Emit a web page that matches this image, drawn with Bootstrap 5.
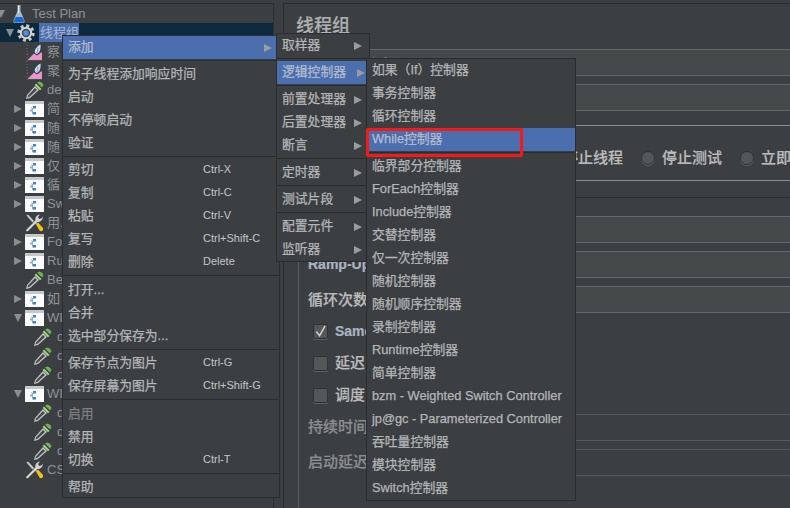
<!DOCTYPE html>
<html lang="zh">
<head>
<meta charset="utf-8">
<title>JMeter</title>
<link href="https://cdn.jsdelivr.net/npm/bootstrap@5.3.0/dist/css/bootstrap.min.css" rel="stylesheet">
<style>
html,body{width:790px;height:508px;overflow:hidden;background:#3c3f41;}
body{font-family:"Liberation Sans","Noto Sans CJK SC",sans-serif;font-size:13px;color:#bbb;position:relative;}
.app-shell{height:508px;padding-top:3px;}
/* tree */
.tree-pane{width:274px;flex:none;border-top:1px solid #2b2d2f;border-right:1px solid #2d2f31;overflow:hidden;}
.tnode{height:19px;color:#8f9396;white-space:nowrap;}
.tnode.sel{background:#0d293e;}
.lv0{padding-left:0}.lv1{padding-left:6px}.lv2,.lv3{padding-left:14px}
.tw{flex:none;display:block;}
.lv0 .tw{width:13px}.lv1 .tw{width:11px}.lv2 .tw{width:11px}.lv3 .tw{width:19px}
.tri-r,.tri-d{display:block;width:0;height:0;border-style:solid;border-color:transparent;}
.tri-r{border-width:4.5px 0 4.5px 8px;border-left-color:#8a8d8f;}
.tri-d{border-width:8px 4.5px 0 4.5px;border-top-color:#8a8d8f;}
.lv0 .tri-d{margin-left:-3px}
.ico{flex:none;display:block;}
.lv0 .lbl{margin-left:7px}.lv1 .lbl{margin-left:4px;padding:0 1px;background:#4b6eaf;color:#a9b7cf;width:40px}
.lv2 .lbl{margin-left:3px}.lv3 .lbl{margin-left:5px}
/* splitter */
.split-bar{width:9px;flex:none;padding-top:327px;padding-left:5px;}
.split-dot{display:block;width:1px;height:2px;background:#ddd;margin-bottom:2px;}
/* right */
.main-pane{flex:1 1 auto;min-width:0;border-top:1px solid #2b2d2f;border-left:1px solid #2b2d2f;overflow:hidden;font-size:15px;font-weight:500;-webkit-text-stroke:.2px currentColor;}
.pane-title{font-size:18px;line-height:22px;margin:11px 0 12px 12px;color:#aeb1b3;height:22px;}
.fld-row{height:27px;margin-bottom:8px;}
.fld-lbl{flex:none;width:70px;white-space:nowrap;overflow:hidden;}
.jm-input.form-control{height:27px;flex:1 1 auto;min-width:0;background:#45494a;color:#bbb;border:0;border-top:1px solid #646769;border-bottom:1px solid #646769;border-radius:0;padding:0 12px;font-size:13px;box-shadow:none;}
.jm-input.dim{background:#3c3f41;border-color:#565859;}
.first-fld{margin-left:60px}
.act-grp{margin-top:14px;height:56px;border-top:1px solid #8a8c8d;border-bottom:1px solid #8a8c8d;margin-left:80px;padding-left:199px;padding-top:10px;white-space:nowrap;}
.act-grp .form-check-input{margin:0 7px 0 18px;flex:none;}
.act-grp span{flex:none;}
.form-check-input.jm-ck{width:14px;height:14px;background-color:#54575a;border:1px solid #2f3133;box-shadow:0 1px 0 #5c5f61;}
.chk-row .form-check-input.jm-ck{width:15px;height:15px;border-radius:2px;}
.form-check-input.jm-ck:checked{background-color:#54575a;border-color:#2f3133;background-image:url("data:image/svg+xml,%3Csvg xmlns='http://www.w3.org/2000/svg' viewBox='0 0 14 14'%3E%3Cpath d='M2.500 7l3.500 4.500L12 1' fill='none' stroke='%23d0d0d0' stroke-width='1.600'/%3E%3C/svg%3E");}
.thr-grp{margin-top:16px;margin-left:14px;border-top:1px solid #2b2d2f;border-left:1px solid #5a5d5f;padding:18px 0 40px 9px;height:400px;}
.chk-row{height:32px;padding-left:5px;}
.chk-row .form-check-input{margin:0 7px 0 0;flex:none;}
.chk-first{margin-top:-6px}
.chk-last{margin-bottom:3px}
.txt-strong{font-size:14px;font-weight:700;color:#a9b4c2;}
.txt-dim{color:#8b8d8f;}
.lift-1{position:relative;top:1px}
/* menus */
.jm-menu.dropdown-menu{position:absolute;margin:0;padding:0;min-width:0;background:#3c3f41;border:1px solid #2a2c2e;border-radius:0;font-size:12.800px;font-weight:500;-webkit-text-stroke:.25px currentColor;}
.jm-m1{left:62px;top:35px;width:218px;height:463px;overflow:hidden;z-index:10;}
.jm-m2{left:276px;top:33px;width:94px;z-index:11;}
.jm-m3{left:366px;top:58px;width:210px;z-index:12;}
.jm-menu .dropdown-item{height:23px;line-height:21px;padding:0 0 2px 5px;color:#b4b6b8;display:flex;align-items:center;white-space:nowrap;}
.jm-menu .dropdown-item.active{background:#4b6eaf;color:#b4bccb;}
.jm-menu .dropdown-item.disabled{color:#7d7f81;}
.jm-menu .dropdown-divider{margin:0;height:4px;border:0;border-top:1px solid #2a2c2e;opacity:1;transform:translateY(1px);}
.jm-menu .dropdown-divider.div-wide{height:5px;}
.itm-name{width:135px;flex:none;}
.itm-key{font-size:11px;font-weight:400;color:#c4c6c8;-webkit-text-stroke:0;}
.sub-arrow{margin-left:auto;margin-right:7px;width:0;height:0;border-style:solid;border-color:transparent;border-width:4.5px 0 4.5px 8px;border-left-color:#9a9c9e;flex:none;position:relative;top:1px;}
.jm-m2 .sub-arrow{margin-right:7px}
.jm-m2 .dropdown-item.active{margin-right:3px}
.jm-m2 .active .sub-arrow{margin-right:4px}
.red-mark{position:absolute;left:366px;top:128px;width:157px;height:29px;border:3px solid #f41a1a;border-radius:2px;z-index:13;}
</style>
</head>
<body>
<svg width="0" height="0" class="d-block position-absolute">
<defs>
<symbol id="i-flask" viewBox="0 0 12 18">
<path d="M4.500 0h3v6l4 9.500q.5 2-1.500 2.500H2q-2-.5-1.500-2.500l4-9.500z" fill="#aab6c0"/>
<path d="M2.800 12h6.400l1.800 3.500q.3 1.700-1.300 2H2.300q-1.600-.3-1.300-2z" fill="#1668d8"/>
<path d="M5 1h1v7H5z" fill="#e6eef4"/>
</symbol>
<symbol id="i-gear" viewBox="0 0 18 18">
<circle cx="9" cy="9" r="7.300" fill="none" stroke="#c9c9c9" stroke-width="2.800" stroke-dasharray="3 2.730"/>
<circle cx="9" cy="9" r="6.200" fill="#d6d6d6"/>
<circle cx="9" cy="9" r="4.200" fill="#3f4a55"/>
<circle cx="9" cy="9" r="2.700" fill="#4f8fe0"/>
</symbol>
<symbol id="i-lsn" viewBox="0 0 19 19">
<path d="M2 0v19" stroke="#6a6d6f" stroke-dasharray="1 2" fill="none"/>
<path d="M2 12h2" stroke="#6a6d6f" stroke-dasharray="1 1" fill="none"/>
<path d="M3 17.500 9 11.500l3 2 5-3.500v7.500z" fill="#f291cf"/>
<path d="M3 17.500h14v.6H3z" fill="#e9e9e9"/>
<path d="M15.500 2.500c.5 4-.5 8-3.500 9.500-2.500-.5-2.800-3-1.500-5 1-1.700 3-3.700 5-4.500z" fill="#c9dcef"/>
<path d="M13 6c0 2-.5 4-1.500 5" stroke="#6f9bd0" fill="none"/>
</symbol>
<symbol id="i-drop" viewBox="0 0 19 18">
<path d="M1 16.500l3-1 1 .9-3 1.300z" fill="#2c2e30"/>
<path d="M14.500 0.500q3 .5 4 3.500l-1.500 2.500-5-5z" fill="#6fb356"/>
<path d="M11 2.500l5.500 5.500-1.500 1.300-5.300-5.300z" fill="#9fdc7f"/>
<path d="M10 5l4 4-9 8-4 1 1-4z" fill="#c3c6c8"/>
<path d="M10 7l2 2-7.500 6.800-2 .7.600-2z" fill="#44484b"/>
</symbol>
<symbol id="i-doc" viewBox="0 0 19 16">
<rect width="19" height="16" fill="#fbfbfb"/>
<rect width="19" height="3" fill="#c5c7c9"/>
<path d="M6 7h1.500v6H9" stroke="#a5a9ad" fill="none"/>
<rect x="8" y="5" width="3" height="2.500" fill="#3584dc"/>
<rect x="5" y="8.500" width="2.500" height="2" fill="#7fb2ea"/>
<rect x="8" y="11" width="3" height="2.500" fill="#3584dc"/>
</symbol>
<symbol id="i-tool" viewBox="0 0 19 18">
<path d="M1.500 1.500l1.500-1 6 6.500-1.500 1.500z" fill="#c9cbcd"/>
<path d="M8.500 8l1.500-1.500 2.500 2.500-1.500 1.500z" fill="#a9abad"/>
<path d="M11 10.500l2-2 5 5.500q.5 1.500-.7 2.700-1.300 1-2.600.1z" fill="#f2c511"/>
<path d="M1.500 15.500 11 6l1.500 1.500L3 17q-1 .7-1.700-.1-.5-.7.200-1.400z" fill="#d8d8d8"/>
<path d="M10.500 6.500c-.8-2.500.8-5.500 4.500-6l-2 2.500 1.200 2 2.500-.7 1-1.800c.6 3-2.200 6-5.500 5.500z" fill="#cfd1d3"/>
</symbol>
</defs>
</svg>

<div class="app-shell d-flex">
  <div class="tree-pane">
    <div class="tnode d-flex align-items-center lv0"><span class="tw"><i class="tri-d"></i></span><svg class="ico" width="12" height="18"><use href="#i-flask"/></svg><span class="lbl">Test Plan</span></div>
    <div class="tnode sel d-flex align-items-center lv1"><span class="tw"><i class="tri-d"></i></span><svg class="ico" width="18" height="18"><use href="#i-gear"/></svg><span class="lbl">线程组</span></div>
    <div class="tnode d-flex align-items-center lv2"><span class="tw"></span><svg class="ico" width="19" height="19"><use href="#i-lsn"/></svg><span class="lbl">察</span></div>
    <div class="tnode d-flex align-items-center lv2"><span class="tw"></span><svg class="ico" width="19" height="19"><use href="#i-lsn"/></svg><span class="lbl">聚</span></div>
    <div class="tnode d-flex align-items-center lv2"><span class="tw"></span><svg class="ico" width="19" height="18"><use href="#i-drop"/></svg><span class="lbl">de</span></div>
    <div class="tnode d-flex align-items-center lv2"><span class="tw"><i class="tri-r"></i></span><svg class="ico" width="19" height="16"><use href="#i-doc"/></svg><span class="lbl">简</span></div>
    <div class="tnode d-flex align-items-center lv2"><span class="tw"><i class="tri-r"></i></span><svg class="ico" width="19" height="16"><use href="#i-doc"/></svg><span class="lbl">随</span></div>
    <div class="tnode d-flex align-items-center lv2"><span class="tw"><i class="tri-r"></i></span><svg class="ico" width="19" height="16"><use href="#i-doc"/></svg><span class="lbl">随</span></div>
    <div class="tnode d-flex align-items-center lv2"><span class="tw"><i class="tri-r"></i></span><svg class="ico" width="19" height="16"><use href="#i-doc"/></svg><span class="lbl">仅</span></div>
    <div class="tnode d-flex align-items-center lv2"><span class="tw"><i class="tri-r"></i></span><svg class="ico" width="19" height="16"><use href="#i-doc"/></svg><span class="lbl">循</span></div>
    <div class="tnode d-flex align-items-center lv2"><span class="tw"><i class="tri-r"></i></span><svg class="ico" width="19" height="16"><use href="#i-doc"/></svg><span class="lbl">Sw</span></div>
    <div class="tnode d-flex align-items-center lv2"><span class="tw"></span><svg class="ico" width="19" height="18"><use href="#i-tool"/></svg><span class="lbl">用.</span></div>
    <div class="tnode d-flex align-items-center lv2"><span class="tw"><i class="tri-r"></i></span><svg class="ico" width="19" height="16"><use href="#i-doc"/></svg><span class="lbl">Fo</span></div>
    <div class="tnode d-flex align-items-center lv2"><span class="tw"><i class="tri-r"></i></span><svg class="ico" width="19" height="16"><use href="#i-doc"/></svg><span class="lbl">Ru</span></div>
    <div class="tnode d-flex align-items-center lv2"><span class="tw"></span><svg class="ico" width="19" height="18"><use href="#i-drop"/></svg><span class="lbl">Be</span></div>
    <div class="tnode d-flex align-items-center lv2"><span class="tw"><i class="tri-r"></i></span><svg class="ico" width="19" height="16"><use href="#i-doc"/></svg><span class="lbl">如</span></div>
    <div class="tnode d-flex align-items-center lv2"><span class="tw"><i class="tri-d"></i></span><svg class="ico" width="19" height="16"><use href="#i-doc"/></svg><span class="lbl">WI</span></div>
    <div class="tnode d-flex align-items-center lv3"><span class="tw"></span><svg class="ico" width="19" height="18"><use href="#i-drop"/></svg><span class="lbl">d</span></div>
    <div class="tnode d-flex align-items-center lv3"><span class="tw"></span><svg class="ico" width="19" height="18"><use href="#i-drop"/></svg><span class="lbl">d</span></div>
    <div class="tnode d-flex align-items-center lv3"><span class="tw"></span><svg class="ico" width="19" height="18"><use href="#i-drop"/></svg><span class="lbl">d</span></div>
    <div class="tnode d-flex align-items-center lv2"><span class="tw"><i class="tri-d"></i></span><svg class="ico" width="19" height="16"><use href="#i-doc"/></svg><span class="lbl">WI</span></div>
    <div class="tnode d-flex align-items-center lv3"><span class="tw"></span><svg class="ico" width="19" height="18"><use href="#i-drop"/></svg><span class="lbl">d</span></div>
    <div class="tnode d-flex align-items-center lv3"><span class="tw"></span><svg class="ico" width="19" height="18"><use href="#i-drop"/></svg><span class="lbl">d</span></div>
    <div class="tnode d-flex align-items-center lv3"><span class="tw"></span><svg class="ico" width="19" height="18"><use href="#i-drop"/></svg><span class="lbl">d</span></div>
    <div class="tnode d-flex align-items-center lv2"><span class="tw"></span><svg class="ico" width="19" height="18"><use href="#i-tool"/></svg><span class="lbl">CS</span></div>
  </div>

  <div class="split-bar"><i class="split-dot"></i><i class="split-dot"></i><i class="split-dot"></i></div>

  <div class="main-pane">
    <div class="pane-title">线程组</div>
    <div class="fld-row d-flex first-fld"><input class="form-control jm-input" value="线程组" aria-label="名称"></div>
    <div class="fld-row d-flex first-fld"><input class="form-control jm-input" aria-label="注释"></div>
    <div class="act-grp d-flex align-items-center">
      <span>停止线程</span>
      <input class="form-check-input jm-ck" type="radio" name="act" aria-label="停止测试"><span>停止测试</span>
      <input class="form-check-input jm-ck" type="radio" name="act" aria-label="立即"><span>立即</span>
    </div>
    <div class="thr-grp">
      <div class="fld-row d-flex"><span class="fld-lbl"></span><input class="form-control jm-input" aria-label="线程数"></div>
      <div class="fld-row d-flex align-items-center"><span class="fld-lbl txt-strong">Ramp-Up</span><input class="form-control jm-input" aria-label="Ramp-Up"></div>
      <div class="fld-row d-flex align-items-center"><span class="fld-lbl lift-1">循环次数</span><input class="form-control jm-input" aria-label="循环次数"></div>
      <div class="chk-row chk-first d-flex align-items-center"><input class="form-check-input jm-ck" type="checkbox" checked aria-label="Same"><span class="txt-strong">Same</span></div>
      <div class="chk-row d-flex align-items-center"><input class="form-check-input jm-ck" type="checkbox" aria-label="延迟"><span>延迟</span></div>
      <div class="chk-row chk-last d-flex align-items-center"><input class="form-check-input jm-ck" type="checkbox" aria-label="调度"><span>调度</span></div>
      <div class="fld-row d-flex align-items-center"><span class="fld-lbl txt-dim">持续时间</span><input class="form-control jm-input dim" aria-label="持续时间"></div>
      <div class="fld-row d-flex align-items-center"><span class="fld-lbl txt-dim">启动延迟</span><input class="form-control jm-input dim" aria-label="启动延迟"></div>
    </div>
  </div>
</div>

<div class="dropdown-menu show jm-menu jm-m1">
  <a class="dropdown-item active" href="#"><span class="itm-name">添加</span><i class="sub-arrow"></i></a>
  <div class="dropdown-divider"></div>
  <a class="dropdown-item" href="#">为子线程添加响应时间</a>
  <a class="dropdown-item" href="#">启动</a>
  <a class="dropdown-item" href="#">不停顿启动</a>
  <a class="dropdown-item" href="#">验证</a>
  <div class="dropdown-divider"></div>
  <a class="dropdown-item" href="#"><span class="itm-name">剪切</span><span class="itm-key">Ctrl-X</span></a>
  <a class="dropdown-item" href="#"><span class="itm-name">复制</span><span class="itm-key">Ctrl-C</span></a>
  <a class="dropdown-item" href="#"><span class="itm-name">粘贴</span><span class="itm-key">Ctrl-V</span></a>
  <a class="dropdown-item" href="#"><span class="itm-name">复写</span><span class="itm-key">Ctrl+Shift-C</span></a>
  <a class="dropdown-item" href="#"><span class="itm-name">删除</span><span class="itm-key">Delete</span></a>
  <div class="dropdown-divider div-wide"></div>
  <a class="dropdown-item" href="#">打开...</a>
  <a class="dropdown-item" href="#">合并</a>
  <a class="dropdown-item" href="#">选中部分保存为...</a>
  <div class="dropdown-divider"></div>
  <a class="dropdown-item" href="#"><span class="itm-name">保存节点为图片</span><span class="itm-key">Ctrl-G</span></a>
  <a class="dropdown-item" href="#"><span class="itm-name">保存屏幕为图片</span><span class="itm-key">Ctrl+Shift-G</span></a>
  <div class="dropdown-divider div-wide"></div>
  <a class="dropdown-item disabled" href="#">启用</a>
  <a class="dropdown-item" href="#">禁用</a>
  <a class="dropdown-item" href="#"><span class="itm-name">切换</span><span class="itm-key">Ctrl-T</span></a>
  <div class="dropdown-divider"></div>
  <a class="dropdown-item" href="#">帮助</a>
</div>

<div class="dropdown-menu show jm-menu jm-m2">
  <a class="dropdown-item" href="#">取样器<i class="sub-arrow"></i></a>
  <div class="dropdown-divider"></div>
  <a class="dropdown-item active" href="#">逻辑控制器<i class="sub-arrow"></i></a>
  <div class="dropdown-divider"></div>
  <a class="dropdown-item" href="#">前置处理器<i class="sub-arrow"></i></a>
  <a class="dropdown-item" href="#">后置处理器<i class="sub-arrow"></i></a>
  <a class="dropdown-item" href="#">断言<i class="sub-arrow"></i></a>
  <div class="dropdown-divider"></div>
  <a class="dropdown-item" href="#">定时器<i class="sub-arrow"></i></a>
  <div class="dropdown-divider"></div>
  <a class="dropdown-item" href="#">测试片段<i class="sub-arrow"></i></a>
  <div class="dropdown-divider"></div>
  <a class="dropdown-item" href="#">配置元件<i class="sub-arrow"></i></a>
  <a class="dropdown-item" href="#">监听器<i class="sub-arrow"></i></a>
</div>

<div class="dropdown-menu show jm-menu jm-m3">
  <a class="dropdown-item" href="#">如果（If）控制器</a>
  <a class="dropdown-item" href="#">事务控制器</a>
  <a class="dropdown-item" href="#">循环控制器</a>
  <a class="dropdown-item active" href="#">While控制器</a>
  <div class="dropdown-divider"></div>
  <a class="dropdown-item" href="#">临界部分控制器</a>
  <a class="dropdown-item" href="#">ForEach控制器</a>
  <a class="dropdown-item" href="#">Include控制器</a>
  <a class="dropdown-item" href="#">交替控制器</a>
  <a class="dropdown-item" href="#">仅一次控制器</a>
  <a class="dropdown-item" href="#">随机控制器</a>
  <a class="dropdown-item" href="#">随机顺序控制器</a>
  <a class="dropdown-item" href="#">录制控制器</a>
  <a class="dropdown-item" href="#">Runtime控制器</a>
  <a class="dropdown-item" href="#">简单控制器</a>
  <a class="dropdown-item" href="#">bzm - Weighted Switch Controller</a>
  <a class="dropdown-item" href="#">jp@gc - Parameterized Controller</a>
  <a class="dropdown-item" href="#">吞吐量控制器</a>
  <a class="dropdown-item" href="#">模块控制器</a>
  <a class="dropdown-item" href="#">Switch控制器</a>
</div>

<div class="red-mark"></div>
<script src="https://cdn.jsdelivr.net/npm/bootstrap@5.3.0/dist/js/bootstrap.bundle.min.js"></script>
</body>
</html>
